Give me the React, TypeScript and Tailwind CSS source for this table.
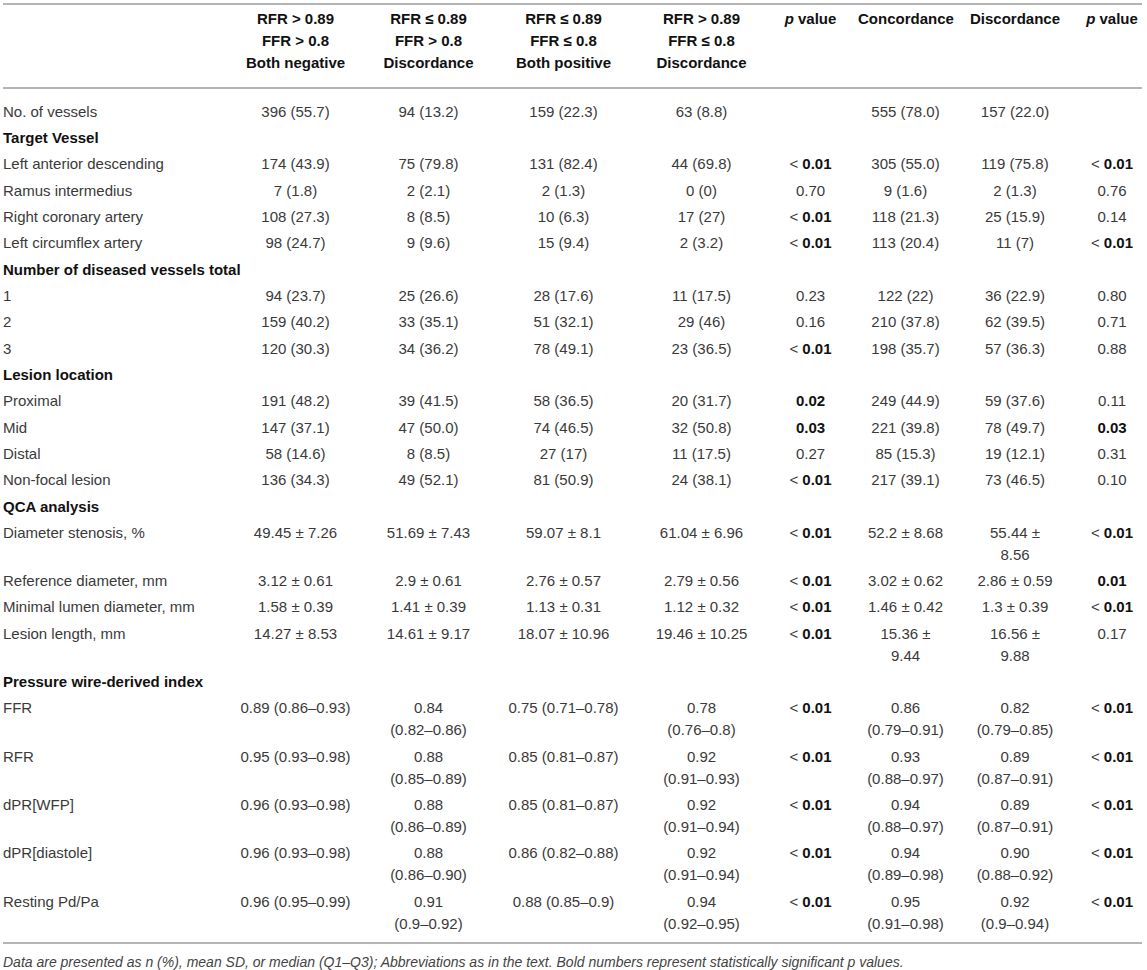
import React from "react";

type Cell = string;
type Row =
  | { kind: "section"; label: string }
  | { kind: "data"; label: string; cells: Cell[]; first?: boolean };

const rows: Row[] = [
  { kind: "data", first: true, label: "No. of vessels", cells: ["396 (55.7)", "94 (13.2)", "159 (22.3)", "63 (8.8)", "", "555 (78.0)", "157 (22.0)", ""] },
  { kind: "section", label: "Target Vessel" },
  { kind: "data", label: "Left anterior descending", cells: ["174 (43.9)", "75 (79.8)", "131 (82.4)", "44 (69.8)", "*<0.01", "305 (55.0)", "119 (75.8)", "*<0.01"] },
  { kind: "data", label: "Ramus intermedius", cells: ["7 (1.8)", "2 (2.1)", "2 (1.3)", "0 (0)", "0.70", "9 (1.6)", "2 (1.3)", "0.76"] },
  { kind: "data", label: "Right coronary artery", cells: ["108 (27.3)", "8 (8.5)", "10 (6.3)", "17 (27)", "*<0.01", "118 (21.3)", "25 (15.9)", "0.14"] },
  { kind: "data", label: "Left circumflex artery", cells: ["98 (24.7)", "9 (9.6)", "15 (9.4)", "2 (3.2)", "*<0.01", "113 (20.4)", "11 (7)", "*<0.01"] },
  { kind: "section", label: "Number of diseased vessels total" },
  { kind: "data", label: "1", cells: ["94 (23.7)", "25 (26.6)", "28 (17.6)", "11 (17.5)", "0.23", "122 (22)", "36 (22.9)", "0.80"] },
  { kind: "data", label: "2", cells: ["159 (40.2)", "33 (35.1)", "51 (32.1)", "29 (46)", "0.16", "210 (37.8)", "62 (39.5)", "0.71"] },
  { kind: "data", label: "3", cells: ["120 (30.3)", "34 (36.2)", "78 (49.1)", "23 (36.5)", "*<0.01", "198 (35.7)", "57 (36.3)", "0.88"] },
  { kind: "section", label: "Lesion location" },
  { kind: "data", label: "Proximal", cells: ["191 (48.2)", "39 (41.5)", "58 (36.5)", "20 (31.7)", "*0.02", "249 (44.9)", "59 (37.6)", "0.11"] },
  { kind: "data", label: "Mid", cells: ["147 (37.1)", "47 (50.0)", "74 (46.5)", "32 (50.8)", "*0.03", "221 (39.8)", "78 (49.7)", "*0.03"] },
  { kind: "data", label: "Distal", cells: ["58 (14.6)", "8 (8.5)", "27 (17)", "11 (17.5)", "0.27", "85 (15.3)", "19 (12.1)", "0.31"] },
  { kind: "data", label: "Non-focal lesion", cells: ["136 (34.3)", "49 (52.1)", "81 (50.9)", "24 (38.1)", "*<0.01", "217 (39.1)", "73 (46.5)", "0.10"] },
  { kind: "section", label: "QCA analysis" },
  { kind: "data", label: "Diameter stenosis, %", cells: ["49.45 ± 7.26", "51.69 ± 7.43", "59.07 ± 8.1", "61.04 ± 6.96", "*<0.01", "52.2 ± 8.68", "55.44 ±\n8.56", "*<0.01"] },
  { kind: "data", label: "Reference diameter, mm", cells: ["3.12 ± 0.61", "2.9 ± 0.61", "2.76 ± 0.57", "2.79 ± 0.56", "*<0.01", "3.02 ± 0.62", "2.86 ± 0.59", "*0.01"] },
  { kind: "data", label: "Minimal lumen diameter, mm", cells: ["1.58 ± 0.39", "1.41 ± 0.39", "1.13 ± 0.31", "1.12 ± 0.32", "*<0.01", "1.46 ± 0.42", "1.3 ± 0.39", "*<0.01"] },
  { kind: "data", label: "Lesion length, mm", cells: ["14.27 ± 8.53", "14.61 ± 9.17", "18.07 ± 10.96", "19.46 ± 10.25", "*<0.01", "15.36 ±\n9.44", "16.56 ±\n9.88", "0.17"] },
  { kind: "section", label: "Pressure wire-derived index" },
  { kind: "data", label: "FFR", cells: ["0.89 (0.86–0.93)", "0.84\n(0.82–0.86)", "0.75 (0.71–0.78)", "0.78\n(0.76–0.8)", "*<0.01", "0.86\n(0.79–0.91)", "0.82\n(0.79–0.85)", "*<0.01"] },
  { kind: "data", label: "RFR", cells: ["0.95 (0.93–0.98)", "0.88\n(0.85–0.89)", "0.85 (0.81–0.87)", "0.92\n(0.91–0.93)", "*<0.01", "0.93\n(0.88–0.97)", "0.89\n(0.87–0.91)", "*<0.01"] },
  { kind: "data", label: "dPR[WFP]", cells: ["0.96 (0.93–0.98)", "0.88\n(0.86–0.89)", "0.85 (0.81–0.87)", "0.92\n(0.91–0.94)", "*<0.01", "0.94\n(0.88–0.97)", "0.89\n(0.87–0.91)", "*<0.01"] },
  { kind: "data", label: "dPR[diastole]", cells: ["0.96 (0.93–0.98)", "0.88\n(0.86–0.90)", "0.86 (0.82–0.88)", "0.92\n(0.91–0.94)", "*<0.01", "0.94\n(0.89–0.98)", "0.90\n(0.88–0.92)", "*<0.01"] },
  { kind: "data", label: "Resting Pd/Pa", cells: ["0.96 (0.95–0.99)", "0.91\n(0.9–0.92)", "0.88 (0.85–0.9)", "0.94\n(0.92–0.95)", "*<0.01", "0.95\n(0.91–0.98)", "0.92\n(0.9–0.94)", "*<0.01"] },
];

function CellContent({ v }: { v: string }) {
  if (v.startsWith("*<")) {
    return (
      <>
        <span>&lt; </span>
        <span className="font-bold text-[#111]">{v.slice(2)}</span>
      </>
    );
  }
  if (v.startsWith("*")) {
    return <span className="font-bold text-[#111]">{v.slice(1)}</span>;
  }
  const parts = v.split("\n");
  return (
    <>
      {parts.map((p, i) => (
        <React.Fragment key={i}>
          {i > 0 && <br />}
          {p}
        </React.Fragment>
      ))}
    </>
  );
}

const widths = [226, 133, 133, 137, 124, 102, 102, 104, 78];
// per-column horizontal padding that nudges the centred text
const colPad = ["", "", "", "", "pl-[15px]", "pl-[7px]", "pr-[7px]", "pl-[6px]", "pl-[18px]"];

const headers: React.ReactNode[] = [
  null,
  <>RFR &gt; 0.89<br />FFR &gt; 0.8<br />Both negative</>,
  <>RFR ≤ 0.89<br />FFR &gt; 0.8<br />Discordance</>,
  <>RFR ≤ 0.89<br />FFR ≤ 0.8<br />Both positive</>,
  <>RFR &gt; 0.89<br />FFR ≤ 0.8<br />Discordance</>,
  <><i>p</i> value</>,
  <>Concordance</>,
  <>Discordance</>,
  <><i>p</i> value</>,
];

export default function App() {
  return (
    <div
      className="w-[1147px] h-[970px] bg-white pl-[3px] pt-[3px] text-[#3a3a3a]"
      style={{ fontFamily: '"Liberation Sans", Arial, Helvetica, sans-serif' }}
    >
      <table className="table-fixed border-collapse w-[1139px] text-[15px] leading-[22px]">
        <colgroup>
          {widths.map((w, i) => (
            <col key={i} style={{ width: w }} />
          ))}
        </colgroup>
        <thead>
          <tr className="border-t-2 border-b-2 border-[#b4b4b4] align-top text-[#111]">
            {headers.map((h, i) => (
              <th key={i} className={`pt-[3px] pb-[13px] font-bold text-center whitespace-nowrap ${colPad[i]}`}>
                {h}
              </th>
            ))}
          </tr>
        </thead>
        <tbody className="border-b-2 border-[#b4b4b4]">
          {rows.map((r, i) => {
            const last = i === rows.length - 1;
            const pad = r.kind === "data" && r.first ? "pt-[12px] pb-[2px]" : last ? "pt-[2.16px] pb-[7px]" : "py-[2.16px]";
            if (r.kind === "section") {
              return (
                <tr key={i}>
                  <td colSpan={9} className={`${pad} font-bold text-[#111] whitespace-nowrap`}>
                    {r.label}
                  </td>
                </tr>
              );
            }
            return (
              <tr key={i} className="align-top">
                <td className={`${pad} whitespace-nowrap`}>{r.label}</td>
                {r.cells.map((c, j) => (
                  <td key={j} className={`${pad} ${colPad[j + 1]} text-center whitespace-nowrap`}>
                    <CellContent v={c} />
                  </td>
                ))}
              </tr>
            );
          })}
        </tbody>
      </table>
      <p className="mt-[9px] text-[14px] leading-[18px] italic text-[#444]">
        Data are presented as n (%), mean SD, or median (Q1–Q3); Abbreviations as in the text. Bold numbers represent statistically significant p values.
      </p>
    </div>
  );
}
